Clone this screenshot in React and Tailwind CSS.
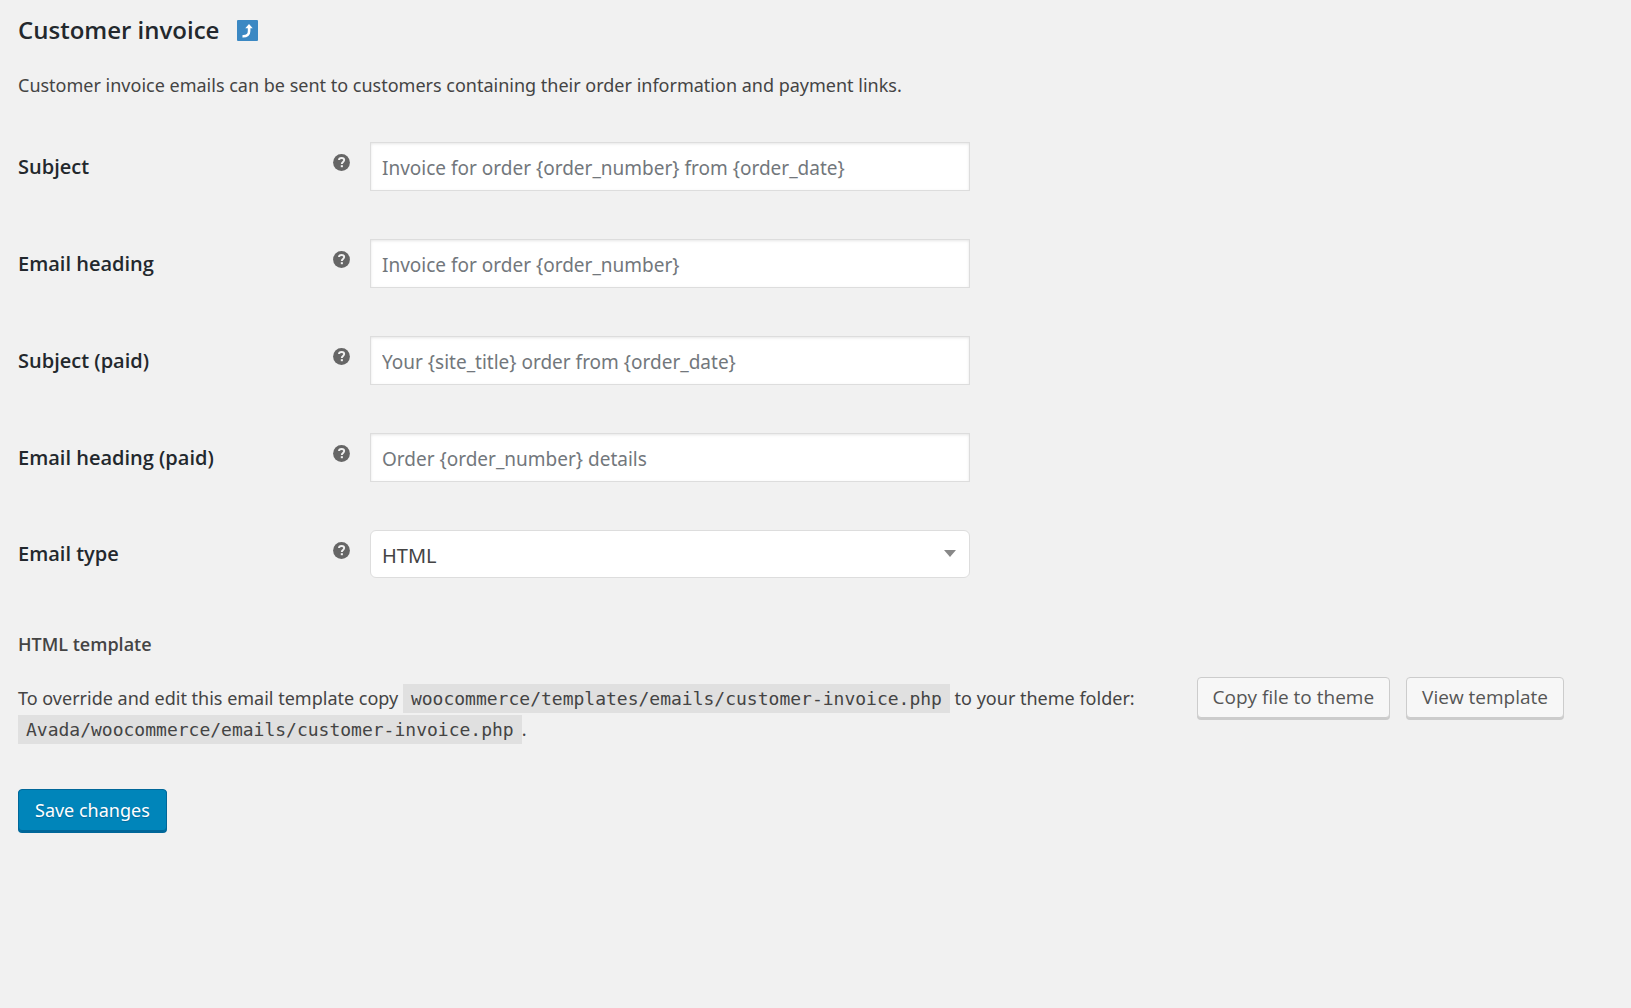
import { useState } from 'react';

const textFields = [
  { id: 'subject', label: 'Subject', placeholder: 'Invoice for order {order_number} from {order_date}' },
  { id: 'heading', label: 'Email heading', placeholder: 'Invoice for order {order_number}' },
  { id: 'subject_paid', label: 'Subject (paid)', placeholder: 'Your {site_title} order from {order_date}' },
  { id: 'heading_paid', label: 'Email heading (paid)', placeholder: 'Order {order_number} details' },
];

function HelpTip() {
  return (
    <svg viewBox="0 0 17 17" className="w-[17px] h-[17px] mb-2 shrink-0" aria-hidden="true">
      <circle cx="8.5" cy="8.5" r="8.4" fill="#666" />
      <path d="M6 6.1C6 4.7 7.1 4 8.6 4c1.5 0 2.6.8 2.6 2.1 0 1.9-2.4 1.9-2.4 3.9" fill="none" stroke="#f1f1f1" strokeWidth="1.9" />
      <rect x="7.8" y="11.2" width="2.1" height="2" fill="#f1f1f1" />
    </svg>
  );
}

function BackIcon() {
  return (
    <svg viewBox="0 0 21 21" className="w-[21px] h-[21px]" aria-hidden="true">
      <rect width="21" height="21" rx="1" fill="#3b88c3" />
      <path d="M5.5 16.3c4.6.2 6.6-1.6 6.6-5.3V7" fill="none" stroke="#fff" strokeWidth="2.6" />
      <path d="M8.3 8.2L12 4l3.7 4.2z" fill="#fff" />
    </svg>
  );
}

function FieldRow({ id, label, children }) {
  return (
    <div className="flex items-center py-6">
      <label htmlFor={id} className="w-[315px] shrink-0 font-['Open_Sans',sans-serif] text-[20px] leading-7 font-semibold text-[#23282d]">
        {label}
      </label>
      <HelpTip />
      <div className="relative ml-5 w-full max-w-[600px]">{children}</div>
    </div>
  );
}

function Code({ children }) {
  return (
    <code className="bg-[#e0e0e0] px-2 py-1 font-['DejaVu_Sans_Mono',monospace] text-[18px] whitespace-nowrap">
      {children}
    </code>
  );
}

function SmallButton({ children }) {
  return (
    <button
      type="button"
      className="h-[41px] px-[15px] rounded border border-[#ccc] bg-[#f7f7f7] font-['Open_Sans',sans-serif] text-[19px] text-[#555] shadow-[0_2px_0_#ccc] whitespace-nowrap"
    >
      {children}
    </button>
  );
}

function App() {
  const [values, setValues] = useState({});
  const [emailType, setEmailType] = useState('html');

  return (
    <main className="min-h-screen bg-[#f1f1f1] pl-[18px] pr-[67px] pt-[14px] pb-10 font-['Noto_Sans',sans-serif] text-[18px] text-[#444]">
      <form onSubmit={(e) => e.preventDefault()}>
        <h2 className="flex items-center gap-[18px] font-['Open_Sans',sans-serif] text-[24px] leading-8 font-semibold text-[#23282d]">
          Customer invoice
          <a href="#emails" aria-label="Return to emails">
            <BackIcon />
          </a>
        </h2>

        <p className="mt-6 leading-[30px]">
          Customer invoice emails can be sent to customers containing their order information and payment links.
        </p>

        <div className="mt-[18px]">
          {textFields.map((field) => (
            <FieldRow key={field.id} id={field.id} label={field.label}>
              <input
                id={field.id}
                type="text"
                placeholder={field.placeholder}
                value={values[field.id] || ''}
                onChange={(e) => setValues({ ...values, [field.id]: e.target.value })}
                className="block w-full h-[49px] px-[11px] pt-[3px] border border-[#ddd] bg-white text-[19px] text-[#32373c] placeholder:text-[#72777c] shadow-[inset_0_1px_3px_rgba(0,0,0,0.1)]"
              />
            </FieldRow>
          ))}

          <FieldRow id="email_type" label="Email type">
            <select
              id="email_type"
              value={emailType}
              onChange={(e) => setEmailType(e.target.value)}
              className="block w-full h-12 px-[11px] pt-1 appearance-none rounded-md border border-[#ddd] bg-white text-[20px] text-[#444]"
            >
              <option value="plain">Plain text</option>
              <option value="html">HTML</option>
              <option value="multipart">Multipart</option>
            </select>
            <svg viewBox="0 0 12 7" className="absolute right-[14px] top-5 w-3 h-[7px] pointer-events-none" aria-hidden="true">
              <path d="M0 0h12L6 7z" fill="#888" />
            </svg>
          </FieldRow>
        </div>

        <h4 className="mt-[26px] leading-8 font-['Open_Sans',sans-serif] font-semibold">HTML template</h4>

        <div className="mt-[17px] flex items-start justify-between gap-8">
          <p className="pt-[6px] leading-[31px]">
            To override and edit this email template copy <Code>woocommerce/templates/emails/customer-invoice.php</Code> to
            your theme folder: <Code>Avada/woocommerce/emails/customer-invoice.php</Code>.
          </p>
          <div className="flex shrink-0 gap-4">
            <SmallButton>Copy file to theme</SmallButton>
            <SmallButton>View template</SmallButton>
          </div>
        </div>

        <button
          type="submit"
          className="mt-11 h-[43px] px-4 rounded border border-[#006799] bg-[#0085ba] text-[18px] text-white shadow-[0_1px_0_#006799,inset_0_-1px_0_#006799] text-shadow-[0_1px_1px_#006799]"
        >
          Save changes
        </button>
      </form>
    </main>
  );
}

export default App;
